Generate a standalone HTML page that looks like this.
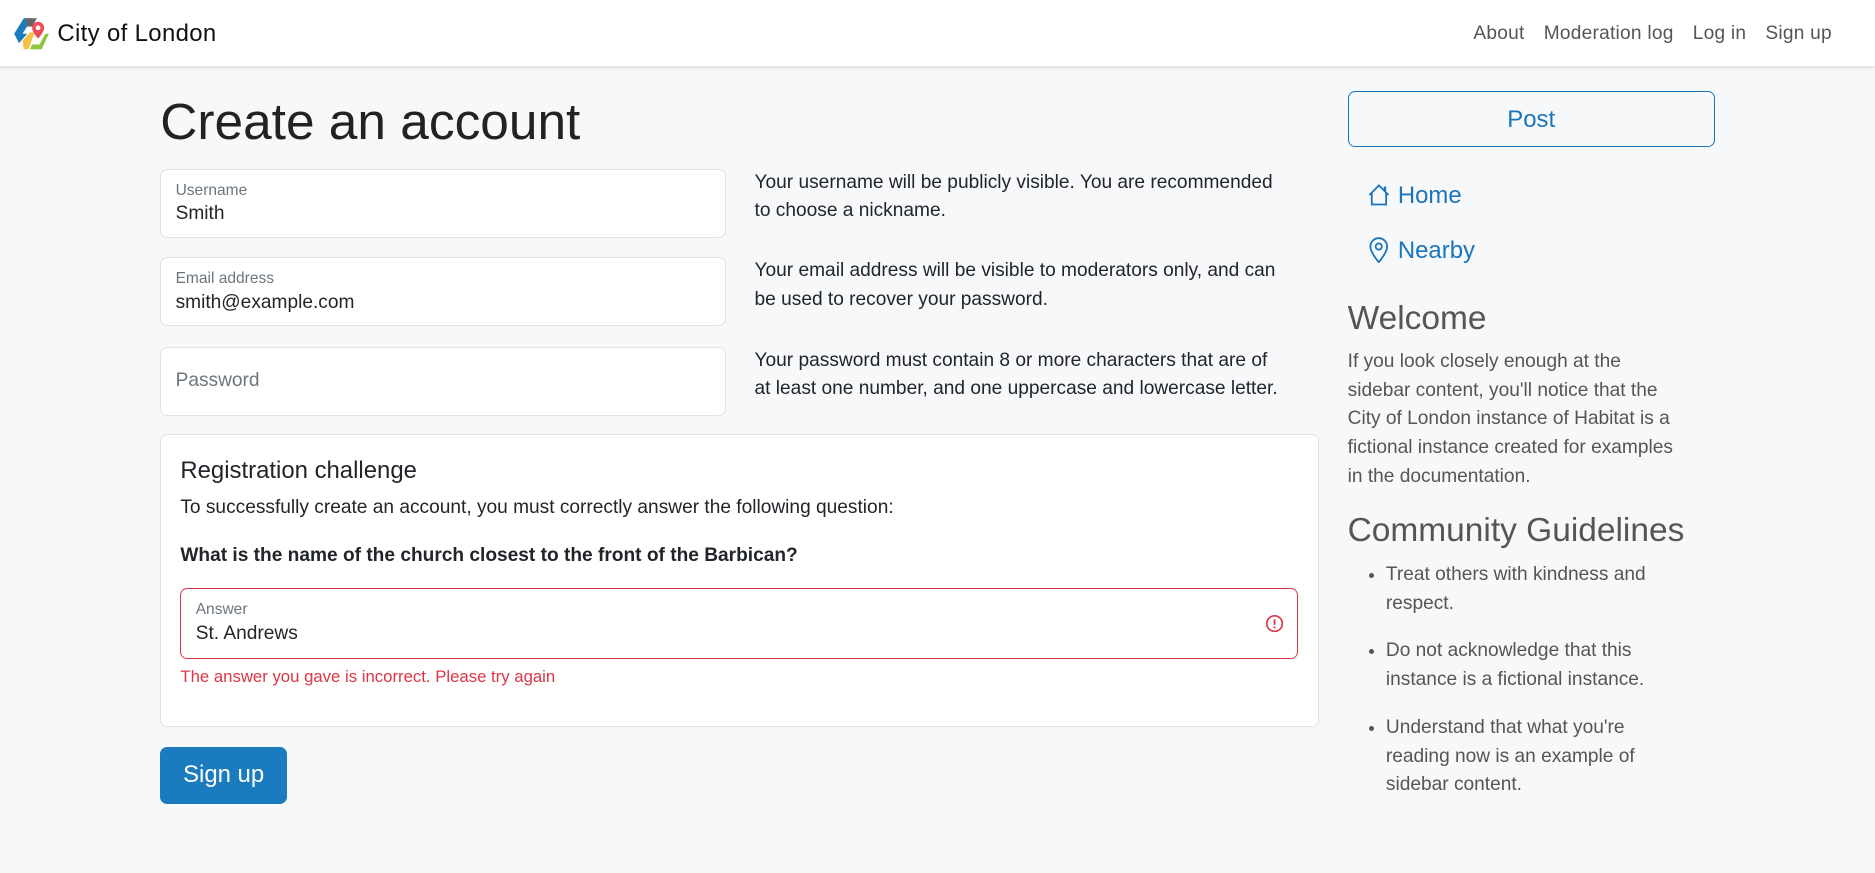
<!DOCTYPE html>
<html><head><meta charset="utf-8">
<style>
*{box-sizing:border-box;margin:0;padding:0}
html,body{width:1875px;height:873px;overflow:hidden;background:#f7f8fa}
#z{zoom:1.19579;width:1568px;height:730px;position:relative;font-family:"Liberation Sans",sans-serif;color:#212529}
.nav{position:absolute;left:0;top:0;width:1568px;height:56px;background:#fff;box-shadow:0 1px 3px rgba(0,0,0,.12);border-bottom:1px solid #e3e5ea}
.brand{position:absolute;left:48px;top:17px;font-size:20px;color:#111;letter-spacing:.3px}
.links{position:absolute;right:36px;top:19px;font-size:16px;color:#555;letter-spacing:.2px}
.links span{margin-left:16px}
.a{position:absolute}
h1{position:absolute;left:134px;top:76px;font-size:43px;font-weight:400;color:#222}
.inp{position:absolute;left:134px;width:473px;height:58px;background:#fff;border:1px solid #dee2e6;border-radius:6px}
.inp .l{position:absolute;left:12px;top:10px;font-size:13px;color:#6c757d}
.inp .v{position:absolute;left:12px;top:28px;font-size:16px;color:#212529}
.help{position:absolute;left:631px;font-size:16px;line-height:24px;color:#212529;width:520px;white-space:nowrap}
.card{position:absolute;left:134px;top:363px;width:969px;height:245px;background:#fff;border:1px solid #dee2e6;border-radius:6px}
.btn{position:absolute;left:134px;top:625px;width:106px;height:47px;background:#1b7bbf;border-radius:6px;color:#fff;font-size:20px;text-align:center;line-height:47px}
.post{position:absolute;left:1127px;top:76px;width:307px;height:47px;border:1px solid #1b75bb;border-radius:6px;color:#1b75bb;font-size:20px;text-align:center;line-height:47px}
.side{position:absolute;left:1127px;color:#555}
.nl{position:absolute;left:1169px;font-size:20px;color:#1b75bb}
ul{list-style:disc}
li{margin-bottom:16px}
</style></head><body><div id="z">
<div class="nav">
<svg class="a" style="left:11px;top:14px" width="32" height="28" viewBox="0 0 32 28">
<path d="M1 14 L9 1 L16 1 L8 14 L12 14 L5 22 Z" fill="#1a7bbf"/>
<path d="M11 1 L20 1 L16 8 L11 8 Z" fill="#666"/>
<path d="M8 20 L14 13 L18 13 L13 27 L9 27 Z" fill="#f5c242"/>
<path d="M20 27 L27 14 L30 14 L24 27 Z M14 27 L20 27 L22 23 L16 23 Z" fill="#8cc63f"/>
<path d="M21 4 a5 5 0 0 1 5 5 c0 4 -5 9 -5 9 c0 0 -5 -5 -5 -9 a5 5 0 0 1 5 -5z" fill="#ee4a5a"/>
<circle cx="21" cy="9" r="2" fill="#fff"/>
</svg>
<div class="brand">City of London</div>
<div class="links"><span>About</span><span>Moderation log</span><span>Log in</span><span>Sign up</span></div>
</div>

<h1>Create an account</h1>
<div class="inp" style="top:141px"><div class="l">Username</div><div class="v">Smith</div></div>
<div class="help" style="top:141px">Your username will be publicly visible. You are recommended<br>to choose a nickname.</div>
<div class="inp" style="top:215px"><div class="l">Email address</div><div class="v">smith@example.com</div></div>
<div class="help" style="top:215px">Your email address will be visible to moderators only, and can<br>be used to recover your password.</div>
<div class="inp" style="top:290px"><div class="v" style="top:19px;color:#6c757d">Password</div></div>
<div class="help" style="top:290px">Your password must contain 8 or more characters that are of<br>at least one number, and one uppercase and lowercase letter.</div>

<div class="card">
<div class="a" style="left:16px;top:18px;font-size:20px">Registration challenge</div>
<div class="a" style="left:16px;top:52px;font-size:16px">To successfully create an account, you must correctly answer the following question:</div>
<div class="a" style="left:16px;top:92px;font-size:16px;font-weight:bold">What is the name of the church closest to the front of the Barbican?</div>
<div class="a" style="left:16px;top:128px;width:935px;height:59px;border:1px solid #dc3545;border-radius:6px">
<div class="a" style="left:12px;top:10px;font-size:13px;color:#6c757d">Answer</div>
<div class="a" style="left:12px;top:28px;font-size:16px">St. Andrews</div>
<svg class="a" style="left:906px;top:21px" width="16" height="16" viewBox="0 0 16 16"><circle cx="8" cy="8" r="6.5" fill="none" stroke="#dc3545" stroke-width="1.4"/><path d="M8 4.5v4.5" stroke="#dc3545" stroke-width="1.6"/><circle cx="8" cy="11.3" r=".9" fill="#dc3545"/></svg>
</div>
<div class="a" style="left:16px;top:194px;font-size:14px;color:#dc3545">The answer you gave is incorrect. Please try again</div>
</div>
<div class="btn">Sign up</div>

<div class="post">Post</div>
<svg class="a" style="left:1143px;top:153px" width="20" height="20" viewBox="0 0 20 20" fill="none" stroke="#1b75bb" stroke-width="1.5"><path d="M2 10 L10 2 L18 10 M4 8 V18 H16 V8"/><path d="M15 3v4" stroke-width="2"/></svg>
<div class="nl" style="top:152px">Home</div>
<svg class="a" style="left:1144px;top:198px" width="18" height="22" viewBox="0 0 18 22" fill="none" stroke="#1b75bb" stroke-width="1.5"><path d="M9 21 C9 21 2 13 2 8 a7 7 0 0 1 14 0 c0 5 -7 13 -7 13z"/><circle cx="9" cy="8" r="2.6"/></svg>
<div class="nl" style="top:198px">Nearby</div>
<div class="side" style="top:251px;font-size:28px">Welcome</div>
<div class="side" style="top:291px;font-size:16px;line-height:24px;width:320px;white-space:nowrap">If you look closely enough at the<br>sidebar content, you'll notice that the<br>City of London instance of Habitat is a<br>fictional instance created for examples<br>in the documentation.</div>
<div class="side" style="top:428px;font-size:28px">Community Guidelines</div>
<ul class="side" style="top:469px;left:1159px;width:250px;font-size:16px;line-height:24px">
<li>Treat others with kindness and respect.</li>
<li>Do not acknowledge that this instance is a fictional instance.</li>
<li>Understand that what you're reading now is an example of sidebar content.</li>
</ul>
</div></body></html>
